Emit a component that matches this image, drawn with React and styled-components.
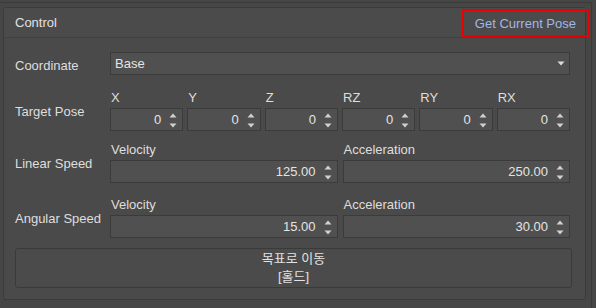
import React from "react";
import styled, { createGlobalStyle } from "styled-components";

const Global = createGlobalStyle`
  html, body { margin: 0; padding: 0; background: #464646; }
  body { font-family: "Liberation Sans", "Noto Sans CJK KR", Arial, sans-serif; font-size: 13px; color: #dedede; }
  * { box-sizing: border-box; }
`;

const Screen = styled.div`
  width: 596px;
  height: 308px;
  background: #464646;
  overflow: hidden;
  padding-top: 2px;
`;

const Frame = styled.div`
  width: 592px;
  height: 306px;
  border-top: 1px solid #3a3a3a;
  border-right: 1px solid #3a3a3a;
  padding: 4px 5px 0 3px;
`;

const Group = styled.section`
  width: 583px;
  height: 293px;
  background: #4a4a4a;
  border: 1px solid #3b3b3b;
  border-radius: 3px;
  display: flex;
  flex-direction: column;
`;

const Header = styled.header`
  height: 30px;
  display: flex;
  align-items: center;
  justify-content: space-between;
  padding-left: 11px;
  border-bottom: 1px solid #414141;
  background: #4b4b4b;
`;

const Title = styled.span`
  color: #e2e2e2;
  font-size: 13px;
`;

const LinkButton = styled.button`
  height: 28px;
  margin-top: 1px;
  margin-right: -4px;
  padding: 0 11px;
  border: 2px solid #ee0000;
  background: transparent;
  color: #a3b6e4;
  font-family: inherit;
  font-size: 13px;
  cursor: pointer;
`;

const Body = styled.div`
  flex: 1;
  padding: 14px 14px 12px 11px;
  display: flex;
  flex-direction: column;
`;

const Row = styled.div`
  display: grid;
  grid-template-columns: 95px 460px;
  align-items: center;
  margin-top: ${(p) => p.$mt || 0}px;
`;

const RowLabel = styled.div`
  color: #dedede;
  padding-top: ${(p) => p.$pt || 0}px;
`;

const Fields = styled.div`
  display: grid;
  grid-template-columns: repeat(${(p) => p.$cols}, 1fr);
  column-gap: ${(p) => p.$gap}px;
`;

const Field = styled.div`
  display: flex;
  flex-direction: column;
`;

const SubLabel = styled.div`
  height: 14px;
  line-height: 14px;
  margin-bottom: 3px;
  padding-left: 1px;
  color: #dedede;
`;

const Box = styled.div`
  height: 23px;
  background: #505050;
  border: 1px solid #3b3b3b;
  display: flex;
  align-items: center;
  position: relative;
`;

const ComboText = styled.span`
  flex: 1;
  padding-left: 4px;
  color: #e4e4e4;
`;

const Value = styled.span`
  flex: 1;
  text-align: right;
  padding-right: 21px;
  color: #e4e4e4;
`;

const Arrows = styled.div`
  position: absolute;
  right: 5px;
  top: 4px;
  width: 8px;
  height: 15px;
  display: flex;
  flex-direction: column;
  justify-content: space-between;
`;

const Tri = styled.svg`
  display: block;
`;

const Spin = () => (
  <Arrows>
    <Tri width="8" height="5" viewBox="0 0 8 5">
      <path d="M0.5 4.5 L4 0.5 L7.5 4.5 Z" fill="#d0d0d0" />
    </Tri>
    <Tri width="8" height="5" viewBox="0 0 8 5">
      <path d="M0.5 0.5 L4 4.5 L7.5 0.5 Z" fill="#d0d0d0" />
    </Tri>
  </Arrows>
);

const DropArrow = styled.svg`
  margin-right: 4px;
`;

const ActionButton = styled.button`
  margin-top: 10px;
  height: 40px;
  width: 557px;
  background: #4b4b4b;
  border: 1px solid #3a3a3a;
  border-radius: 3px;
  color: #e2e2e2;
  font-family: "Liberation Sans", "Noto Sans CJK KR", sans-serif;
  font-size: 13px;
  line-height: 18px;
  padding: 0;
  cursor: pointer;
`;

const axes = ["X", "Y", "Z", "RZ", "RY", "RX"];

function SpinField({ label, value }) {
  return (
    <Field>
      <SubLabel>{label}</SubLabel>
      <Box>
        <Value>{value}</Value>
        <Spin />
      </Box>
    </Field>
  );
}

export default function App() {
  return (
    <Screen>
      <Global />
      <Frame>
        <Group>
          <Header>
            <Title>Control</Title>
            <LinkButton>Get Current Pose</LinkButton>
          </Header>
          <Body>
            <Row>
              <RowLabel $pt={3}>Coordinate</RowLabel>
              <Box>
                <ComboText>Base</ComboText>
                <DropArrow width="8" height="5" viewBox="0 0 8 5">
                  <path d="M0.5 0.5 L4 4.5 L7.5 0.5 Z" fill="#dcdcdc" />
                </DropArrow>
              </Box>
            </Row>
            <Row $mt={16}>
              <RowLabel $pt={0}>Target Pose</RowLabel>
              <Fields $cols={6} $gap={4}>
                {axes.map((a) => (
                  <SpinField key={a} label={a} value="0" />
                ))}
              </Fields>
            </Row>
            <Row $mt={12}>
              <RowLabel>Linear Speed</RowLabel>
              <Fields $cols={2} $gap={5}>
                <SpinField label="Velocity" value="125.00" />
                <SpinField label="Acceleration" value="250.00" />
              </Fields>
            </Row>
            <Row $mt={15}>
              <RowLabel>Angular Speed</RowLabel>
              <Fields $cols={2} $gap={5}>
                <SpinField label="Velocity" value="15.00" />
                <SpinField label="Acceleration" value="30.00" />
              </Fields>
            </Row>
            <ActionButton>
              목표로 이동
              <br />
              [홀드]
            </ActionButton>
          </Body>
        </Group>
      </Frame>
    </Screen>
  );
}
